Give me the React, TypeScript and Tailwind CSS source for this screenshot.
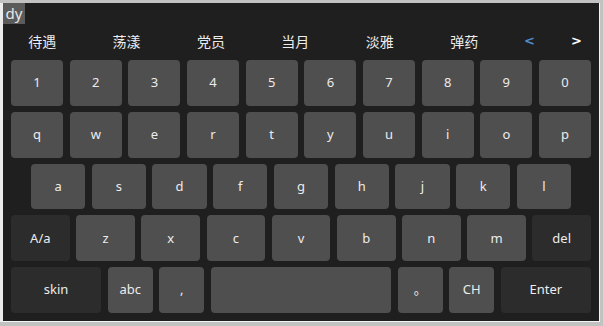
import React from 'react';

type Key = { label: string; dark?: boolean; grow?: string };

const candidates = ['待遇', '荡漾', '党员', '当月', '淡雅', '弹药'];

const rows: Key[][] = [
  '1234567890'.split('').map((c) => ({ label: c })),
  'qwertyuiop'.split('').map((c) => ({ label: c })),
  'asdfghjkl'.split('').map((c) => ({ label: c })),
  [
    { label: 'A/a', dark: true },
    ...'zxcvbnm'.split('').map((c) => ({ label: c })),
    { label: 'del', dark: true },
  ],
  [
    { label: 'skin', dark: true, grow: 'flex-[2]' },
    { label: 'abc' },
    { label: ',' },
    { label: '', grow: 'flex-[4]' },
    { label: '。' },
    { label: 'CH' },
    { label: 'Enter', dark: true, grow: 'flex-[2]' },
  ],
];

const KeyButton: React.FC<{ k: Key }> = ({ k }) => (
  <div
    className={`${k.grow ?? 'flex-1'} min-w-0 rounded-[4px] flex items-center justify-center text-[13px] text-[#ececec] ${
      k.dark ? 'bg-[#2c2c2c]' : 'bg-[#4f4f4f]'
    }`}
  >
    {k.label}
  </div>
);

export default function App() {
  return (
    <div
      className="flex h-[326px] w-[603px] overflow-hidden bg-[#c2c2c2] pt-[3px] pr-[3px] pb-[4px]"
      style={{ fontFamily: '"Noto Sans", "Noto Sans CJK SC", sans-serif' }}
    >
      <div className="w-[3px] bg-[#ececec]" />
      <div className="flex w-[597px] flex-col bg-[#1f1f1f] border-r border-b border-[#f4f4f4]">
        {/* preedit */}
        <div className="flex h-[21px]">
          <div className="flex w-[22px] items-center justify-center bg-[#5b5b5b] text-[15px] leading-none text-[#e6e6e6]">
            dy
          </div>
        </div>

        {/* candidates */}
        <div className="-ml-[3px] flex h-[34px] items-center text-[14px] text-[#ececec]">
          {candidates.map((c) => (
            <div key={c} className="w-[84.4px] shrink-0 text-center">
              {c}
            </div>
          ))}
          <div
            className="ml-[8px] w-[30px] text-center text-[13px] font-bold text-[#4f8cc9]"
            style={{ fontFamily: '"DejaVu Sans", sans-serif' }}
          >
            &lt;
          </div>
          <div
            className="ml-[17px] w-[30px] text-center text-[13px] font-bold text-white"
            style={{ fontFamily: '"DejaVu Sans", sans-serif' }}
          >
            &gt;
          </div>
        </div>

        {/* keyboard */}
        <div className="mt-[2px] flex h-[253px] flex-col gap-[6px] px-[8px]">
          {rows.map((row, i) => (
            <div key={i} className={`flex flex-1 gap-[6.5px] ${i === 2 ? 'px-[20px]' : ''}`}>
              {row.map((k, j) => (
                <KeyButton key={j} k={k} />
              ))}
            </div>
          ))}
        </div>
      </div>
    </div>
  );
}
